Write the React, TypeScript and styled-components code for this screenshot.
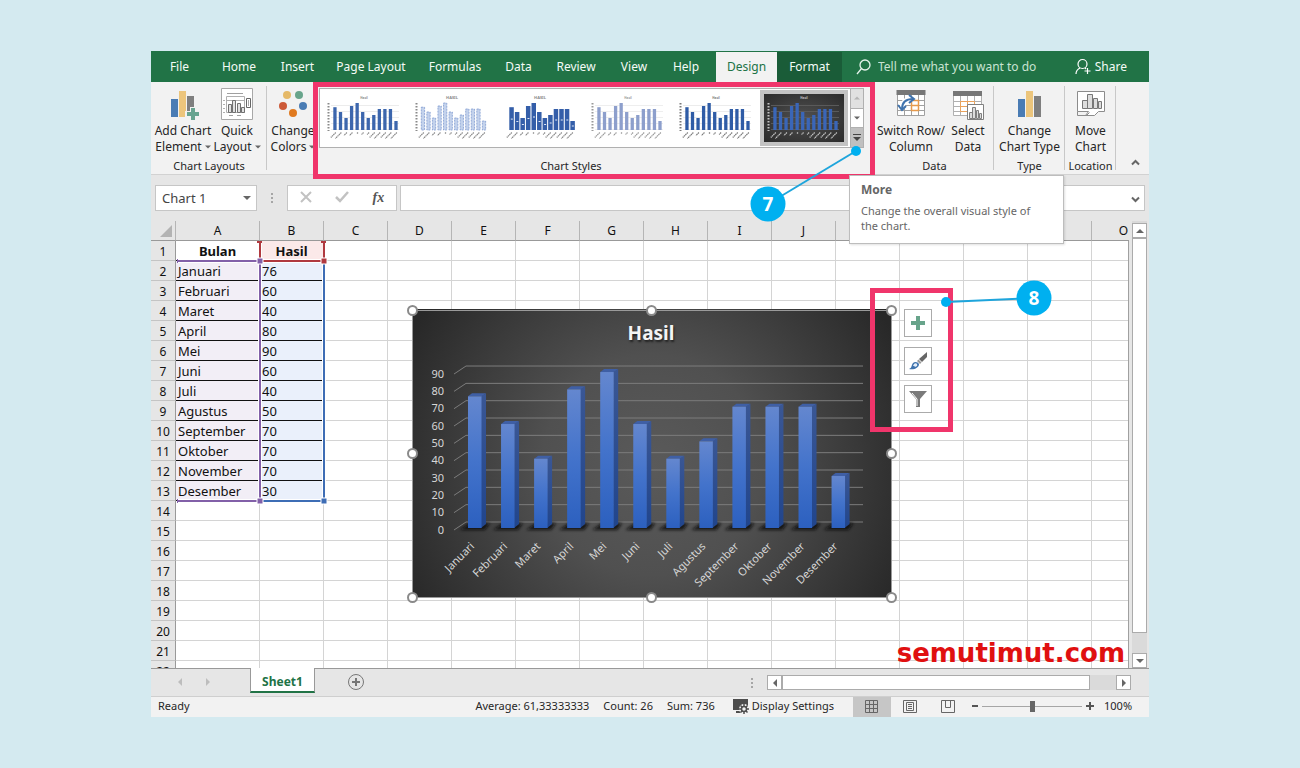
import React from "react";
import styled, { createGlobalStyle, css } from "styled-components";

const GlobalStyle = createGlobalStyle`
  *, *::before, *::after { box-sizing: border-box; }
  body {
    margin: 0;
    background: #d4eaf0;
    font-family: "Noto Sans", "Open Sans", sans-serif;
    font-size: 12px;
    color: #262626;
  }
  button, input, select { font: inherit; color: inherit; margin: 0; }
  button { border: 0; padding: 0; background: none; }
`;

const months = ["Januari", "Februari", "Maret", "April", "Mei", "Juni", "Juli", "Agustus", "September", "Oktober", "November", "Desember"];
const values = [76, 60, 40, 80, 90, 60, 40, 50, 70, 70, 70, 30];
const columns = ["A", "B", "C", "D", "E", "F", "G", "H", "I", "J", "K", "L", "M", "N", "O"];
const rowNumbers = Array.from({ length: 22 }, (_, i) => i + 1);

/* ---------- frame ---------- */

const Page = styled.main`
  height: 100vh;
  min-height: 480px;
  min-width: 1200px;
  padding: 51px 151px;
  display: flex;
`;

const Window = styled.section`
  flex: 1;
  min-width: 0;
  display: flex;
  flex-direction: column;
  background: #e6e6e6;
`;

/* ---------- tab strip ---------- */

const TabStrip = styled.nav`
  height: 31px;
  display: flex;
  background: #217346;
  color: #f4fbf6;
  padding-top: 1px;
`;

const Tab = styled.button<{ $width: number; $look?: "active" | "context" }>`
  width: ${(p) => p.$width}px;
  padding-bottom: 1px;
  white-space: nowrap;
  ${(p) => p.$look === "active" && css`background: #f2f2f2; color: #217346; margin-left: 4px;`}
  ${(p) => p.$look === "context" && css`background: #1a5c38;`}
`;

const TellMe = styled.label`
  flex: 1;
  display: flex;
  align-items: center;
  gap: 7px;
  padding-left: 14px;
`;

const TellMeInput = styled.input`
  flex: 1;
  min-width: 0;
  border: 0;
  padding: 0 0 1px;
  background: transparent;
  &::placeholder { color: #c9e3d3; opacity: 1; }
`;

const ShareButton = styled.button`
  display: flex;
  align-items: center;
  gap: 4px;
  padding: 0 22px 1px 0;
`;

/* ---------- ribbon ---------- */

const Ribbon = styled.div`
  height: 93px;
  display: flex;
  background: #f2f2f2;
  border-bottom: 1px solid #d2d2d2;
`;

const Group = styled.div<{ $grow?: boolean; $width?: number; $line?: boolean }>`
  position: relative;
  flex: ${(p) => (p.$grow ? "1 1 0" : "none")};
  width: ${(p) => (p.$width ? `${p.$width}px` : "auto")};
  min-width: 0;
  display: flex;
  flex-direction: column;
  &::after {
    content: "";
    display: ${(p) => (p.$line ? "block" : "none")};
    position: absolute;
    right: 0;
    top: 4px;
    bottom: 4px;
    width: 1px;
    background: #c8c8c8;
  }
`;

const GroupBody = styled.div<{ $start?: boolean }>`
  flex: 1;
  display: flex;
  justify-content: ${(p) => (p.$start ? "flex-start" : "center")};
  padding-top: 6px;
  padding-left: ${(p) => (p.$start ? "3px" : "0")};
`;

const GroupLabel = styled.div`
  height: 16px;
  line-height: 16px;
  font-size: 11px;
  text-align: center;
`;

const BigButton = styled.button<{ $width: number }>`
  width: ${(p) => p.$width}px;
  height: 68px;
  flex: none;
  display: flex;
  flex-direction: column;
  align-items: center;
  line-height: 16px;
  white-space: nowrap;
`;

const IconBox = styled.span`
  height: 35px;
  display: block;
`;

const Line = styled.span`
  display: flex;
  align-items: center;
  gap: 3px;
`;

const Gallery = styled.div`
  flex: 1;
  min-width: 0;
  height: 60px;
  margin-right: 11px;
  display: flex;
  background: #fff;
  border: 1px solid #b0b0b0;
`;

const Thumbs = styled.div`
  flex: 1;
  min-width: 0;
  padding-right: 3px;
  display: grid;
  grid-template-columns: repeat(6, 1fr);
`;

const Thumb = styled.button<{ $selected?: boolean }>`
  min-width: 0;
  display: flex;
  justify-content: center;
  overflow: hidden;
  svg { flex: none; }
  ${(p) => p.$selected && css`
    margin: 1px 0;
    background: radial-gradient(#505050, #2b2b2b) padding-box;
    border: 4px solid #c3c3c3;
  `}
`;

const GalleryScroll = styled.div`
  width: 14px;
  margin: -1px;
  display: flex;
  flex-direction: column;
  border: 1px solid #b0b0b0;
`;

const GalleryStep = styled.button<{ $tone: string }>`
  flex: 1;
  display: flex;
  align-items: center;
  justify-content: center;
  background: ${(p) => p.$tone};
  & + & { border-top: 1px solid #b0b0b0; }
`;

const CollapseArea = styled.div`
  width: 33px;
  display: flex;
  align-items: flex-end;
  justify-content: center;
  padding: 0 0 4px 6px;
`;

const Highlight = styled.div`
  position: absolute;
  border: 5px solid #f0356b;
  pointer-events: none;
  z-index: 3;
`;

const StylesHighlight = styled(Highlight)`
  left: 46px;
  right: 0;
  top: 0;
  height: 97px;
`;

const StylesCallout = styled.svg`
  position: absolute;
  right: 9px;
  top: 60px;
  z-index: 4;
`;

const Tooltip = styled.div`
  position: absolute;
  left: calc(100% - 26px);
  top: 93px;
  width: 215px;
  height: 69px;
  padding: 4px 22px 4px 11px;
  background: #fff;
  border: 1px solid #bdbdbd;
  box-shadow: 1px 1px 2px #0000001f;
  color: #666;
  font-size: 11px;
  line-height: 15px;
  z-index: 6;
  h2 { margin: 2px 0 6px; font-size: 12px; line-height: 15px; }
  p { margin: 0; }
`;

/* ---------- formula bar ---------- */

const FormulaBar = styled.div`
  height: 46px;
  padding: 10px 4px;
  display: flex;
`;

const NameBox = styled.div`
  width: 102px;
  display: grid;
  align-items: center;
  background: #fff;
  border: 1px solid #c6c6c6;
  & > * { grid-area: 1 / 1; }
  svg { justify-self: end; margin-right: 5px; pointer-events: none; }
`;

const NameSelect = styled.select`
  appearance: none;
  width: 100%;
  height: 24px;
  padding: 0 6px;
  border: 0;
  background: transparent;
  font-size: 13px;
  color: #444;
`;

const Grip = styled.span`
  width: 30px;
  display: flex;
  align-items: center;
  justify-content: center;
`;

const FormulaTools = styled.div`
  width: 110px;
  margin-right: 3px;
  display: flex;
  align-items: center;
  justify-content: space-around;
  background: #fff;
  border: 1px solid #c6c6c6;
`;

const FxButton = styled.button`
  font: italic bold 14px "Liberation Serif", serif;
  color: #555;
`;

const FormulaField = styled.div`
  flex: 1;
  display: flex;
  background: #fff;
  border: 1px solid #c6c6c6;
  input { flex: 1; min-width: 0; border: 0; background: transparent; }
  button { width: 17px; }
`;

/* ---------- sheet ---------- */

const SheetArea = styled.div`
  flex: 1;
  min-height: 0;
  display: flex;
  gap: 3px;
  padding-right: 2px;
`;

const Viewport = styled.div`
  position: relative;
  flex: 1;
  min-width: 0;
  overflow: hidden;
  &::after {
    content: "";
    position: absolute;
    top: 20px;
    right: 0;
    bottom: 0;
    width: 1px;
    background: #a0a0a0;
  }
`;

const Grid = styled.table`
  table-layout: fixed;
  width: 1005px;
  border-collapse: separate;
  border-spacing: 0;
  background: #fff;
  font-size: 13px;
  color: #111;
`;

const ColHead = styled.th`
  height: 20px;
  padding: 0;
  font-weight: normal;
  font-size: 12px;
  line-height: 19px;
  background: #e6e6e6;
  border-bottom: 1px solid #999;
  border-right: 1px solid #b5b5b5;
`;

const Corner = styled(ColHead)`
  width: 25px;
  vertical-align: bottom;
  svg { display: block; margin: 0 3px 3px auto; }
`;

const RowHead = styled.th`
  height: 20px;
  padding: 2px 0 0;
  font-weight: normal;
  font-size: 12px;
  line-height: 17px;
  background: #e6e6e6;
  border-bottom: 1px solid #c4c4c4;
  border-right: 1px solid #999;
`;

const Cell = styled.td<{ $fill?: string; $ruled?: boolean; $head?: boolean }>`
  height: 20px;
  padding: 2px 2px 0;
  line-height: 17px;
  white-space: nowrap;
  background: ${(p) => p.$fill ?? "#fff"};
  border-right: 1px solid #d4d4d4;
  border-bottom: 1px solid ${(p) => (p.$ruled ? "#111" : "#d4d4d4")};
  ${(p) => p.$head && css`font-weight: bold; text-align: center;`}
`;

const RangeLayer = styled.svg`
  position: absolute;
  left: 25px;
  top: 20px;
  pointer-events: none;
`;

const ChartObject = styled.svg`
  position: absolute;
  left: 251px;
  top: 79px;
`;

const ChartTools = styled.div`
  position: absolute;
  left: 753px;
  top: 88px;
  display: flex;
  flex-direction: column;
  gap: 10px;
`;

const ChartTool = styled.button`
  width: 28px;
  height: 28px;
  display: flex;
  align-items: center;
  justify-content: center;
  background: #fff;
  border: 1px solid #ababab;
`;

const ToolsHighlight = styled(Highlight)`
  left: 719px;
  top: 67px;
  width: 83px;
  height: 144px;
`;

const ToolsCallout = styled.svg`
  position: absolute;
  left: 789px;
  top: 58px;
  z-index: 4;
`;

const Watermark = styled.a`
  position: absolute;
  right: 4px;
  bottom: 0;
  font: bold 26px/30px "DejaVu Sans", sans-serif;
  color: #e01010;
  text-decoration: none;
`;

const VScroll = styled.div`
  width: 15px;
  padding-top: 2px;
  display: flex;
  flex-direction: column;
  background: #dadada;
`;

const ScrollButton = styled.button`
  flex: none;
  width: 15px;
  height: 15px;
  display: flex;
  align-items: center;
  justify-content: center;
  background: #fff;
  border: 1px solid #ababab;
`;

const VThumb = styled.div`
  flex: 1;
  margin-bottom: 20px;
  background: #fff;
  border: 1px solid #ababab;
`;

/* ---------- sheet tabs ---------- */

const SheetBar = styled.div`
  height: 28px;
  display: flex;
  border-top: 1px solid #999;
`;

const SheetNav = styled.div`
  width: 99px;
  display: flex;
  align-items: center;
  padding: 0 0 2px 25px;
  gap: 20px;
`;

const SheetTab = styled.button`
  width: 65px;
  height: 25px;
  margin-top: -1px;
  padding-top: 3px;
  background: #fff;
  border: 1px solid #999;
  border-top: 0;
  border-bottom: 2px solid #217346;
  color: #217346;
  font-weight: bold;
`;

const AddSheet = styled.button`
  display: flex;
  align-items: center;
  margin-left: 32px;
  padding-bottom: 2px;
`;

const HScroll = styled.div`
  margin: 6px 18px 0 0;
  width: 364px;
  height: 15px;
  display: flex;
  background: #dadada;
`;

const HThumb = styled.div`
  flex: 1;
  margin-right: 26px;
  background: #fff;
  border: 1px solid #ababab;
`;

const Spacer = styled.div`
  flex: 1;
`;

/* ---------- status bar ---------- */

const StatusBar = styled.footer`
  height: 21px;
  display: flex;
  align-items: center;
  background: #f2f2f2;
  border-top: 1px solid #cfcfcf;
  font-size: 11px;
  line-height: 16px;
  padding: 0 18px 2px 7px;
`;

const Stats = styled.div`
  display: flex;
  gap: 14px;
  margin-right: 18px;
`;

const DisplaySettings = styled.button`
  display: flex;
  align-items: center;
  gap: 3px;
  margin-right: 19px;
`;

const ViewButton = styled.button<{ $on?: boolean }>`
  width: 38px;
  height: 20px;
  margin-bottom: -2px;
  display: flex;
  align-items: center;
  justify-content: center;
  background: ${(p) => (p.$on ? "#c6c6c6" : "transparent")};
`;

const ZoomSign = styled.button`
  width: 15px;
  display: flex;
  justify-content: center;
`;

const ZoomSlider = styled.input`
  appearance: none;
  width: 100px;
  height: 11px;
  background: linear-gradient(#a6a6a6, #a6a6a6) center / 100% 1px no-repeat;
  &::-webkit-slider-thumb {
    appearance: none;
    width: 5px;
    height: 11px;
    background: #666;
  }
`;

const ZoomValue = styled.output`
  width: 27px;
  margin-left: 7px;
`;

/* ---------- small glyphs ---------- */

type Dir = "up" | "down" | "left" | "right";
const triangles: Record<Dir, string> = {
  up: "M0 6h8L4 2z",
  down: "M0 2h8L4 6z",
  left: "M6 0v8L2 4z",
  right: "M2 0v8l4-4z",
};
const Triangle = ({ dir, size = 8, color = "#666" }: { dir: Dir; size?: number; color?: string }) => (
  <svg width={size} height={size} viewBox="0 0 8 8" aria-hidden="true"><path d={triangles[dir]} fill={color} /></svg>
);

const Dots = () => (
  <svg width="4" height="12" aria-hidden="true" fill="#a6a6a6">
    <path d="M1 1h2v2H1zM1 5h2v2H1zM1 9h2v2H1z" />
  </svg>
);

/* ---------- ribbon icons ---------- */

const AddElementIcon = () => (
  <svg width="34" height="34">
    <path d="M5 11h7v18H5z" fill="#4a7cb4" />
    <path d="M13 3h7v26h-7z" fill="#ecc57c" />
    <path d="M21 8h7v21h-7z" fill="#7f7f7f" />
    <path d="M24 19h6v4h5v6h-5v4h-6v-4h-5v-6h5z" fill="#f2f2f2" />
    <path d="M25 20h4v4h4v4h-4v4h-4v-4h-4v-4h4z" fill="#68a490" />
  </svg>
);

const QuickLayoutIcon = () => (
  <svg width="34" height="34" fill="none" stroke="#8c8c8c">
    <path d="M1.500.5h31v31h-31z" fill="#fff" stroke="#a8a8a8" />
    <path d="M7 5.500h16M9 27.500h4M17 27.500h4" stroke="#a0a0a0" />
    <path d="M6.500 8.500h18v16h-18z" stroke="#b0b0b0" />
    <path d="M3 12.500h2M3 16.500h2M3 20.500h2M3 24.500h2M6.500 12.500h18" stroke="#b0b0b0" />
    <path d="M8.500 16.500h3v8h-3zM12.500 12.500h3v12h-3zM17.500 15.500h3v9h-3zM21.500 19.500h3v5h-3z" fill="#e0e0e0" stroke="#707070" />
    <path d="M26.500 10.500h4v9h-4z" fill="#fff" stroke="#666" />
    <path d="M28 13h1M28 15h1M28 17h1" stroke="#555" />
  </svg>
);

const ChangeColorsIcon = () => (
  <svg width="34" height="34">
    <circle cx="11" cy="7" r="4" fill="#e5b968" />
    <circle cx="23" cy="7" r="4" fill="#68a48b" />
    <circle cx="7" cy="18" r="4" fill="#cc5a38" />
    <circle cx="27" cy="18" r="4" fill="#4a7cb4" />
    <circle cx="17" cy="25" r="4" fill="#e07a20" />
  </svg>
);

const SwitchIcon = () => (
  <svg width="34" height="34" fill="none">
    <path d="M3 3h28v25H3z" fill="#fff" />
    <path d="M3.500 7v20.500h27V7M3 12.500h28M3 17.500h28M3 22.500h28M10.500 7v21M17.500 7v21M24.500 7v21" stroke="#a0a0a0" />
    <path d="M2.500 2h29v5h-29z" fill="#777" />
    <path d="M17.500 12.500h7v10h-7zM11 12.500h7M17 17.500h7" stroke="#e69a4c" strokeWidth="1.500" />
    <path d="M8 21c0-7 4-10 11-10" stroke="#fff" strokeWidth="5" />
    <path d="M8 21c0-7 4-10 11-10" stroke="#3f73ae" strokeWidth="2" />
    <path d="M15 7l5 4-5 4M4 17l4 5 4-4" stroke="#3f73ae" strokeWidth="2" />
  </svg>
);

const SelectDataIcon = () => (
  <svg width="34" height="34" fill="none">
    <path d="M3 4h28v24H3z" fill="#fff" />
    <path d="M2.500 8v19.500h28V8M2 13.500h29M2 18.500h29M2 23.500h29M9.500 8v20M16.500 8v20M23.500 8v20" stroke="#b0b0b0" />
    <path d="M2 3h29v5H2z" fill="#777" />
    <path d="M9.500 13.500h14v10h-14zM16.500 13v10M9 18.500h14" stroke="#eba35c" />
    <path d="M16.500 16.500h16v15h-16z" fill="#fff" stroke="#808080" />
    <path d="M18.500 24.500h3v6h-3zM21.500 19.500h3v11h-3zM25.500 22.500h2v8h-2zM28.500 25.500h2v5h-2z" fill="#ddd" stroke="#808080" />
  </svg>
);

const ChartTypeIcon = () => (
  <svg width="34" height="34">
    <path d="M5 11h7v18H5z" fill="#4a7cb4" />
    <path d="M13 3h7v26h-7z" fill="#ecc57c" />
    <path d="M21 8h7v21h-7z" fill="#7f7f7f" />
  </svg>
);

const MoveChartIcon = () => (
  <svg width="34" height="34" fill="none" stroke="#8c8c8c">
    <path d="M3.500 3.500h27v20h-6l-4 4h-9l3-4h-11z" fill="#fff" />
    <path d="M3.500 23.500v4h9l3-3" />
    <path d="M8.500 12.500h5v8h-5zM13.500 6.500h5v14h-5zM19.500 10.500h4v10h-4zM24.500 13.500h3v7h-3z" fill="#ddd" stroke="#777" />
  </svg>
);

/* ---------- gallery thumbnails ---------- */

interface ThumbStyle { title: string; bar: string; text: string; grid: string; edge?: string; wide?: boolean; dashed?: boolean; }
const thumbStyles: ThumbStyle[] = [
  { title: "Hasil", bar: "#3c66ad", text: "#8a8a8a", grid: "#ececec" },
  { title: "HASIL", bar: "#c3d2ec", text: "#8a8a8a", grid: "#fff", edge: "#7f9bd0", dashed: true },
  { title: "HASIL", bar: "#345ea9", text: "#8a8a8a", grid: "#fff", wide: true },
  { title: "Hasil", bar: "#8d9fcc", text: "#9a9a9a", grid: "#eee" },
  { title: "Hasil", bar: "#2f5ca6", text: "#7a7a7a", grid: "#ececec" },
  { title: "Hasil", bar: "#3a66b8", text: "#c4c4c4", grid: "#5a5a5a" },
];

const MiniChart = ({ look, cropped }: { look: ThumbStyle; cropped?: boolean }) => (
  <svg width={cropped ? 80 : 88} height={cropped ? 48 : 58} viewBox={cropped ? "4 5 80 48" : "0 0 88 58"} aria-hidden="true">
    {[0, 1, 2, 3, 4].map((i) => <path key={i} d={`M11 ${16.5 + i * 6}h68`} stroke={look.grid} />)}
    <text x="44" y="10" fontSize={look.title === "HASIL" ? 4 : 3} fontWeight="bold" textAnchor="middle" fill={look.text}>{look.title}</text>
    {!look.wide && <path d="M8.500 14v28" stroke={look.text} strokeWidth="2" strokeDasharray="1.500 1.500" />}
    {values.map((v, i) => {
      const x = 13.300 + i * 5.550;
      const h = v * 0.300;
      const tail = Math.min(months[i].length, 8) - 2;
      return (
        <g key={months[i]}>
          <rect x={x} y={41 - h} width={look.wide ? 4.500 : 3.300} height={h} fill={look.bar} stroke={look.edge} strokeWidth=".8" strokeDasharray={look.dashed ? "2 1" : undefined} />
          {look.wide && <rect x={x + 1.500} y={41 - h / 2} width="2" height="1" fill="#dfe8f7" />}
          <path d={`M${x + 2.500} 43.500l${-tail} ${tail}`} stroke={look.text} strokeWidth="1.200" strokeDasharray="1.500 .5" />
        </g>
      );
    })}
  </svg>
);

/* ---------- worksheet chart ---------- */

const handles = [[0, 0], [239, 0], [479, 0], [0, 143], [479, 143], [0, 287], [239, 287], [479, 287]];

const Chart = () => (
  <ChartObject width="500" height="308" viewBox="-10 -10 500 308" role="img" aria-label="Hasil">
    <defs>
      <radialGradient id="back" gradientUnits="userSpaceOnUse" cx="240" cy="155" r="275">
        <stop offset="0" stopColor="#5a5a5a" />
        <stop offset=".4" stopColor="#505050" />
        <stop offset="1" stopColor="#282828" />
      </radialGradient>
      <linearGradient id="front" x1="0" y1="0" x2="0" y2="1">
        <stop offset="0" stopColor="#6487cf" />
        <stop offset=".5" stopColor="#4373cb" />
        <stop offset="1" stopColor="#2c60bf" />
      </linearGradient>
      <linearGradient id="side" x1="0" y1="0" x2="0" y2="1">
        <stop offset="0" stopColor="#3a5795" />
        <stop offset="1" stopColor="#21458c" />
      </linearGradient>
      <filter id="soft" x="-30%" y="-60%" width="160%" height="220%"><feGaussianBlur stdDeviation="1.500" /></filter>
    </defs>
    <rect x="0" y="-1" width="480" height="289" fill="url(#back)" />
    <path d="M.5.500h479v287H.5z" fill="none" stroke="#9a9a9a" />
    <text x="239" y="30" fontSize="19" fontWeight="bold" textAnchor="middle" fill="#f4f4f4" style={{ textShadow: "1px 2px 2px #222" }}>Hasil</text>
    {Array.from({ length: 10 }, (_, i) => {
      const y = 212 - i * 17.330;
      return (
        <g key={i}>
          <path d={`M42 ${y + 8}L54 ${y}H451`} fill="none" stroke="#7c7c7c" />
          <text x="32" y={y + 11.5} fontSize="11" textAnchor="end" fill="#d6d6d6">{i * 10}</text>
        </g>
      );
    })}
    {values.map((v, i) => {
      const x = 56 + i * 33.050;
      const top = 218 - v * 1.733;
      return (
        <g key={months[i]}>
          <path d={`M${x - 8} 220l10-7h20l-5 7z`} fill="#0c0c0c" opacity=".85" filter="url(#soft)" />
          <path d={`M${x} ${top}l4-3h14l-4 3z`} fill="#3f5fa5" />
          <path d={`M${x + 13} ${top}l5-3V214l-5 4z`} fill="url(#side)" />
          <rect x={x} y={top} width="13.500" height={218 - top} fill="url(#front)" />
          <text transform={`translate(${x + 7} 237) rotate(-45)`} fontSize="11" textAnchor="end" fill="#d6d6d6">{months[i]}</text>
        </g>
      );
    })}
    {handles.map(([x, y]) => (
      <circle key={`${x}-${y}`} cx={x + 0.5} cy={y + 0.5} r="4.500" fill="#fff" stroke="#8a8a8a" strokeWidth="2" />
    ))}
  </ChartObject>
);

const Ranges = () => (
  <RangeLayer width="160" height="270">
    <g fill="none" stroke="#fff" strokeWidth="4">
      <path d="M1 20h147v240H1M84 0v260" />
    </g>
    <g fill="none" strokeWidth="2">
      <path d="M84 260h64V20" stroke="#3e6db5" />
      <path d="M1 20h83v240H1" stroke="#8260a8" />
      <path d="M84 2v18h64V2" stroke="#b0393f" />
    </g>
    <path d="M81 0h5v2h-5zM145 0h5v2h-5z" fill="#b0393f" />
    <path d="M145 17h6v6h-6z" fill="#b0393f" stroke="#fff" />
    <path d="M81 17h6v6h-6zM81 257h6v6h-6z" fill="#8260a8" stroke="#fff" />
    <path d="M145 257h6v6h-6z" fill="#3e6db5" stroke="#fff" />
    <path d="M1 18h1v4H1zM1 258h1v4H1z" fill="#8260a8" />
  </RangeLayer>
);

const cellFill = (col: number, row: number) => {
  if (col === 1 && row === 1) return "#fbe9e9";
  if (row < 2 || row > 13) return undefined;
  return col === 0 ? "#f2eef6" : col === 1 ? "#eaf0fb" : undefined;
};

const cellText = (col: number, row: number) => {
  if (col > 1 || row > 13) return "";
  if (row === 1) return col === 0 ? "Bulan" : "Hasil";
  return col === 0 ? months[row - 2] : values[row - 2];
};

export default function App() {
  return (
    <>
      <GlobalStyle />
      <Page>
        <Window>
          <TabStrip>
            <Tab $width={57}>File</Tab>
            <Tab $width={62}>Home</Tab>
            <Tab $width={55}>Insert</Tab>
            <Tab $width={92}>Page Layout</Tab>
            <Tab $width={76}>Formulas</Tab>
            <Tab $width={51}>Data</Tab>
            <Tab $width={64}>Review</Tab>
            <Tab $width={52}>View</Tab>
            <Tab $width={52}>Help</Tab>
            <Tab $width={61} $look="active">Design</Tab>
            <Tab $width={65} $look="context">Format</Tab>
            <TellMe>
              <svg width="15" height="16" fill="none" stroke="#e6f3eb" strokeWidth="1.300" aria-hidden="true">
                <circle cx="9" cy="6" r="5" /><path d="M5.500 9.500L1 15" />
              </svg>
              <TellMeInput aria-label="Tell me what you want to do" placeholder="Tell me what you want to do" />
            </TellMe>
            <ShareButton>
              <svg width="16" height="17" fill="none" stroke="#fff" strokeWidth="1.200" aria-hidden="true">
                <circle cx="7.500" cy="6" r="4.500" /><path d="M1 16c0-3 2-5 4-6M10 10l1 1M12.500 10v6M9.500 13h6" />
              </svg>
              Share
            </ShareButton>
          </TabStrip>

          <Ribbon>
            <Group $width={116} $line>
              <GroupBody $start>
                <BigButton $width={58}>
                  <IconBox><AddElementIcon /></IconBox>
                  <Line>Add Chart</Line>
                  <Line>Element <Triangle dir="down" size={6} /></Line>
                </BigButton>
                <BigButton $width={50}>
                  <IconBox><QuickLayoutIcon /></IconBox>
                  <Line>Quick</Line>
                  <Line>Layout <Triangle dir="down" size={6} /></Line>
                </BigButton>
              </GroupBody>
              <GroupLabel>Chart Layouts</GroupLabel>
            </Group>

            <Group $grow>
              <GroupBody>
                <BigButton $width={52}>
                  <IconBox><ChangeColorsIcon /></IconBox>
                  <Line>Change</Line>
                  <Line>Colors <Triangle dir="down" size={6} /></Line>
                </BigButton>
                <Gallery>
                  <Thumbs>
                    {thumbStyles.map((look, i) => (
                      <Thumb key={i} $selected={i === 5} aria-label={`Style ${i + 1}`}>
                        <MiniChart look={look} cropped={i === 5} />
                      </Thumb>
                    ))}
                  </Thumbs>
                  <GalleryScroll>
                    <GalleryStep $tone="#e1e1e1" aria-label="Previous row"><Triangle dir="up" size={6} color="#b5b5b5" /></GalleryStep>
                    <GalleryStep $tone="#fff" aria-label="Next row"><Triangle dir="down" size={6} /></GalleryStep>
                    <GalleryStep $tone="#c0c0c0" aria-label="More">
                      <svg width="8" height="8" fill="#444"><path d="M0 0h8v1H0zM0 3h8L4 7z" /></svg>
                    </GalleryStep>
                  </GalleryScroll>
                </Gallery>
              </GroupBody>
              <GroupLabel>Chart Styles</GroupLabel>
              <StylesHighlight />
              <StylesCallout width="120" height="84">
                <path d="M110 9L22 62" stroke="#1ea5dc" strokeWidth="2" />
                <circle cx="110" cy="9" r="5" fill="#00b0f0" />
                <circle cx="22" cy="62" r="17.500" fill="#00b0f0" />
                <text x="22" y="69" fontSize="19" fontWeight="bold" textAnchor="middle" fill="#fff">7</text>
              </StylesCallout>
              <Tooltip role="tooltip">
                <h2>More</h2>
                <p>Change the overall visual style of the chart.</p>
              </Tooltip>
            </Group>

            <Group $width={119} $line>
              <GroupBody $start>
                <BigButton $width={66}>
                  <IconBox><SwitchIcon /></IconBox>
                  <Line>Switch Row/</Line>
                  <Line>Column</Line>
                </BigButton>
                <BigButton $width={48}>
                  <IconBox><SelectDataIcon /></IconBox>
                  <Line>Select</Line>
                  <Line>Data</Line>
                </BigButton>
              </GroupBody>
              <GroupLabel>Data</GroupLabel>
            </Group>
            <Group $width={71} $line>
              <GroupBody>
                <BigButton $width={64}>
                  <IconBox><ChartTypeIcon /></IconBox>
                  <Line>Change</Line>
                  <Line>Chart Type</Line>
                </BigButton>
              </GroupBody>
              <GroupLabel>Type</GroupLabel>
            </Group>
            <Group $width={51} $line>
              <GroupBody>
                <BigButton $width={48}>
                  <IconBox><MoveChartIcon /></IconBox>
                  <Line>Move</Line>
                  <Line>Chart</Line>
                </BigButton>
              </GroupBody>
              <GroupLabel>Location</GroupLabel>
            </Group>
            <CollapseArea>
              <button aria-label="Collapse the ribbon">
                <svg width="9" height="7" fill="none" stroke="#666" strokeWidth="2"><path d="M1 5.500l3.500-3.500L8 5.500" /></svg>
              </button>
            </CollapseArea>
          </Ribbon>

          <FormulaBar>
            <NameBox>
              <NameSelect aria-label="Name box" defaultValue="Chart 1"><option>Chart 1</option></NameSelect>
              <Triangle dir="down" />
            </NameBox>
            <Grip><Dots /></Grip>
            <FormulaTools>
              <button aria-label="Cancel"><svg width="12" height="12" stroke="#c2c2c2" strokeWidth="2"><path d="M1 1l10 10M11 1L1 11" /></svg></button>
              <button aria-label="Enter"><svg width="14" height="12" fill="none" stroke="#c2c2c2" strokeWidth="2.500"><path d="M1 6l4 4 8-9" /></svg></button>
              <FxButton aria-label="Insert function">fx</FxButton>
            </FormulaTools>
            <FormulaField>
              <input aria-label="Formula" />
              <button aria-label="Expand formula bar"><svg width="9" height="7" fill="none" stroke="#666" strokeWidth="2"><path d="M1 1.500l3.500 3.500L8 1.500" /></svg></button>
            </FormulaField>
          </FormulaBar>

          <SheetArea>
            <Viewport>
              <Grid>
                <colgroup>
                  <col width="25" />
                  <col width="84" />
                  {columns.slice(1).map((c) => <col key={c} width="64" />)}
                </colgroup>
                <thead>
                  <tr>
                    <Corner aria-label="Select all"><svg width="12" height="12"><path d="M12 0v12H0z" fill="#b3b3b3" /></svg></Corner>
                    {columns.map((c) => <ColHead key={c} scope="col">{c}</ColHead>)}
                  </tr>
                </thead>
                <tbody>
                  {rowNumbers.map((row) => (
                    <tr key={row}>
                      <RowHead scope="row">{row}</RowHead>
                      {columns.map((c, col) => (
                        <Cell key={c} $fill={cellFill(col, row)} $ruled={col < 2 && row < 14} $head={row === 1}>{cellText(col, row)}</Cell>
                      ))}
                    </tr>
                  ))}
                </tbody>
              </Grid>
              <Ranges />
              <Chart />
              <ChartTools>
                <ChartTool aria-label="Chart elements">
                  <svg width="14" height="14"><path d="M5 0h4v5h5v4H9v5H5V9H0V5h5z" fill="#68a48b" /></svg>
                </ChartTool>
                <ChartTool aria-label="Chart styles">
                  <svg width="20" height="20">
                    <path d="M19 1v5l-5 5-3-3z" fill="#666" />
                    <path d="M10.500 8.500l3 3-1.500 1.500-3-3z" fill="#999" />
                    <path d="M1 18c3-1 2-3 4-6 2-2 5-1 6 1 0 4-5 6-10 5z" fill="#3f73ae" />
                    <path d="M6 13c2-2 4 0 3 2l-2 1c0-1-1-1-2-1z" fill="#e3edf8" />
                  </svg>
                </ChartTool>
                <ChartTool aria-label="Chart filters">
                  <svg width="20" height="20">
                    <path d="M1 2h18l-7 8v8H8v-8z" fill="#7a7a7a" />
                    <path d="M4 4l5 6v7" fill="none" stroke="#fff" />
                  </svg>
                </ChartTool>
              </ChartTools>
              <ToolsHighlight />
              <ToolsCallout width="115" height="40">
                <path d="M6 23L94 19" stroke="#1ea5dc" strokeWidth="2" />
                <circle cx="6" cy="23" r="5" fill="#00b0f0" />
                <circle cx="94" cy="19" r="17.500" fill="#00b0f0" />
                <text x="94" y="26" fontSize="19" fontWeight="bold" textAnchor="middle" fill="#fff">8</text>
              </ToolsCallout>
              <Watermark href="#">semutimut.com</Watermark>
            </Viewport>
            <VScroll>
              <ScrollButton aria-label="Scroll up"><Triangle dir="up" /></ScrollButton>
              <VThumb />
              <ScrollButton aria-label="Scroll down"><Triangle dir="down" /></ScrollButton>
            </VScroll>
          </SheetArea>

          <SheetBar>
            <SheetNav>
              <button aria-label="Previous sheet"><Triangle dir="left" color="#bdbdbd" /></button>
              <button aria-label="Next sheet"><Triangle dir="right" color="#bdbdbd" /></button>
            </SheetNav>
            <SheetTab>Sheet1</SheetTab>
            <AddSheet aria-label="New sheet">
              <svg width="18" height="18" fill="none" stroke="#777"><circle cx="9" cy="9" r="7.500" /><path d="M5 9h8M9 5v8" strokeWidth="2" /></svg>
            </AddSheet>
            <Spacer />
            <Grip><Dots /></Grip>
            <HScroll>
              <ScrollButton aria-label="Scroll left"><Triangle dir="left" /></ScrollButton>
              <HThumb />
              <ScrollButton aria-label="Scroll right"><Triangle dir="right" /></ScrollButton>
            </HScroll>
          </SheetBar>

          <StatusBar>
            <span>Ready</span>
            <Spacer />
            <Stats>
              <span>Average: 61,33333333</span>
              <span>Count: 26</span>
              <span>Sum: 736</span>
            </Stats>
            <DisplaySettings>
              <svg width="16" height="16">
                <path d="M0 1h15v8H9l-3 3H0zM3 13h5v2H3z" fill="#4d4d4d" />
                <circle cx="11" cy="11" r="5" fill="#f2f2f2" />
                <path d="M11 6v10M6 11h10M7.500 7.500l7 7M14.500 7.500l-7 7" stroke="#4d4d4d" strokeWidth="1.500" />
                <circle cx="11" cy="11" r="2.500" fill="#f2f2f2" stroke="#4d4d4d" strokeWidth="1.500" />
              </svg>
              Display Settings
            </DisplaySettings>
            <ViewButton $on aria-label="Normal view">
              <svg width="14" height="14" fill="none" stroke="#666"><path d="M.5.500h12v12H.5zM4.500 0v13M8.500 0v13M0 4.500h13M0 8.500h13" /></svg>
            </ViewButton>
            <ViewButton aria-label="Page layout view">
              <svg width="14" height="14" fill="none" stroke="#666"><path d="M.5.500h13v12H.5zM3.500 2.500h7v8h-7zM5 4.500h4M5 6.500h4M5 8.500h4" /></svg>
            </ViewButton>
            <ViewButton aria-label="Page break preview">
              <svg width="14" height="14" fill="none" stroke="#666"><path d="M.5.500h13v12H.5zM4.500 0v7.500h5V0" /></svg>
            </ViewButton>
            <ZoomSign aria-label="Zoom out"><svg width="8" height="8"><path d="M1 3h6v2H1z" fill="#555" /></svg></ZoomSign>
            <ZoomSlider type="range" aria-label="Zoom" min="0" max="100" defaultValue="50" />
            <ZoomSign aria-label="Zoom in"><svg width="8" height="8"><path d="M3 0h2v3h3v2H5v3H3V5H0V3h3z" fill="#555" /></svg></ZoomSign>
            <ZoomValue>100%</ZoomValue>
          </StatusBar>
        </Window>
      </Page>
    </>
  );
}
